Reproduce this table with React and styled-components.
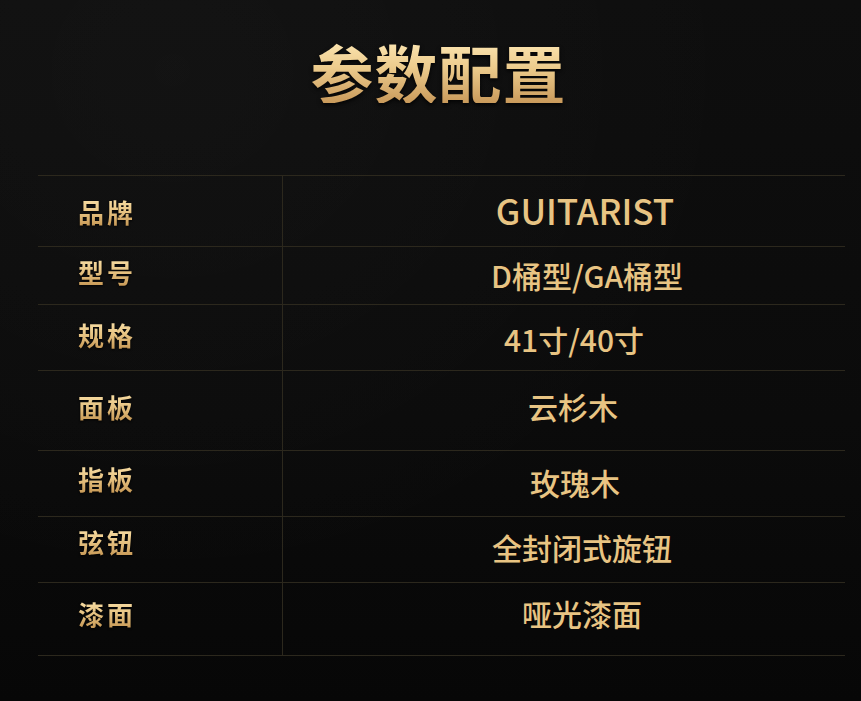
import React from "react";
import styled, { createGlobalStyle } from "styled-components";

const Global = createGlobalStyle`
  html, body { margin: 0; padding: 0; background: #0a0a0a; }
  body { font-family: "Noto Sans CJK SC", "Noto Sans", sans-serif; }
`;

const Page = styled.div`
  width: 861px;
  height: 701px;
  box-sizing: border-box;
  padding-top: 39px;
  background:
    radial-gradient(ellipse at 20% 10%, rgba(255,255,255,0.025), transparent 60%),
    linear-gradient(180deg, #0e0e0e 0%, #0b0b0b 60%, #070707 100%);
  display: flex;
  flex-direction: column;
  align-items: stretch;
  overflow: hidden;
`;

const Title = styled.h1`
  margin: 0 0 0 16px;
  height: 64px;
  line-height: 64px;
  font-size: 63px;
  font-weight: 700;
  text-align: center;
  letter-spacing: 1px;
  font-family: "Noto Sans CJK SC", sans-serif;
  background: linear-gradient(180deg, #fde7b4 0%, #eccb8c 45%, #c99a5b 100%);
  -webkit-background-clip: text;
  background-clip: text;
  color: transparent;
  filter: drop-shadow(0 2px 2px rgba(0, 0, 0, 0.8));
`;

const Table = styled.div`
  margin: 72px 0 0 38px;
  width: 807px;
  border-top: 1px solid #2c281d;
  display: flex;
  flex-direction: column;
`;

const Row = styled.div`
  height: ${(p) => p.$h}px;
  box-sizing: border-box;
  border-bottom: 1px solid #2c281d;
  display: grid;
  grid-template-columns: 244px 1px 1fr;
`;

const Divider = styled.div`
  background: #2c281d;
`;

const LabelCell = styled.div`
  display: flex;
  align-items: center;
  padding-left: 40px;
`;

const Label = styled.span`
  margin-top: ${(p) => 2 * p.$dy}px;
  font-size: 26px;
  line-height: 30px;
  font-weight: 700;
  letter-spacing: 3px;
  background: linear-gradient(180deg, #fbe2aa 0%, #e6c281 50%, #c59653 100%);
  -webkit-background-clip: text;
  background-clip: text;
  color: transparent;
  filter: drop-shadow(0 1px 1px rgba(0, 0, 0, 0.9));
`;

const ValueCell = styled.div`
  display: flex;
  align-items: center;
  justify-content: center;
`;

const Value = styled.span`
  margin-top: ${(p) => 2 * p.$dy}px;
  margin-left: ${(p) => 2 * p.$dx}px;
  font-size: ${(p) => (p.$big ? 35 : 30)}px;
  line-height: 40px;
  font-weight: 500;
  color: #e8c483;
  white-space: nowrap;
`;

const rows = [
  { label: "品牌", value: "GUITARIST", h: 71, ldy: 0.5, vdy: -1, dx: 21, big: true },
  { label: "型号", value: "D桶型/GA桶型", h: 58, ldy: -3.5, vdy: -0.5, dx: 23 },
  { label: "规格", value: "41寸/40寸", h: 66, ldy: -2.5, vdy: 1.5, dx: 10 },
  { label: "面板", value: "云杉木", h: 80, ldy: -3.8, vdy: -4.5, dx: 9 },
  { label: "指板", value: "玫瑰木", h: 66, ldy: -5, vdy: -1.5, dx: 11 },
  { label: "弦钮", value: "全封闭式旋钮", h: 66, ldy: -7.5, vdy: -2.5, dx: 18 },
  { label: "漆面", value: "哑光漆面", h: 73, ldy: -5.5, vdy: -6.3, dx: 18 },
];

export default function App() {
  return (
    <>
      <Global />
      <Page>
        <Title>参数配置</Title>
        <Table>
          {rows.map((r) => (
            <Row key={r.label} $h={r.h}>
              <LabelCell>
                <Label $dy={r.ldy}>{r.label}</Label>
              </LabelCell>
              <Divider />
              <ValueCell>
                <Value $dy={r.vdy} $dx={r.dx} $big={r.big}>
                  {r.value}
                </Value>
              </ValueCell>
            </Row>
          ))}
        </Table>
      </Page>
    </>
  );
}
